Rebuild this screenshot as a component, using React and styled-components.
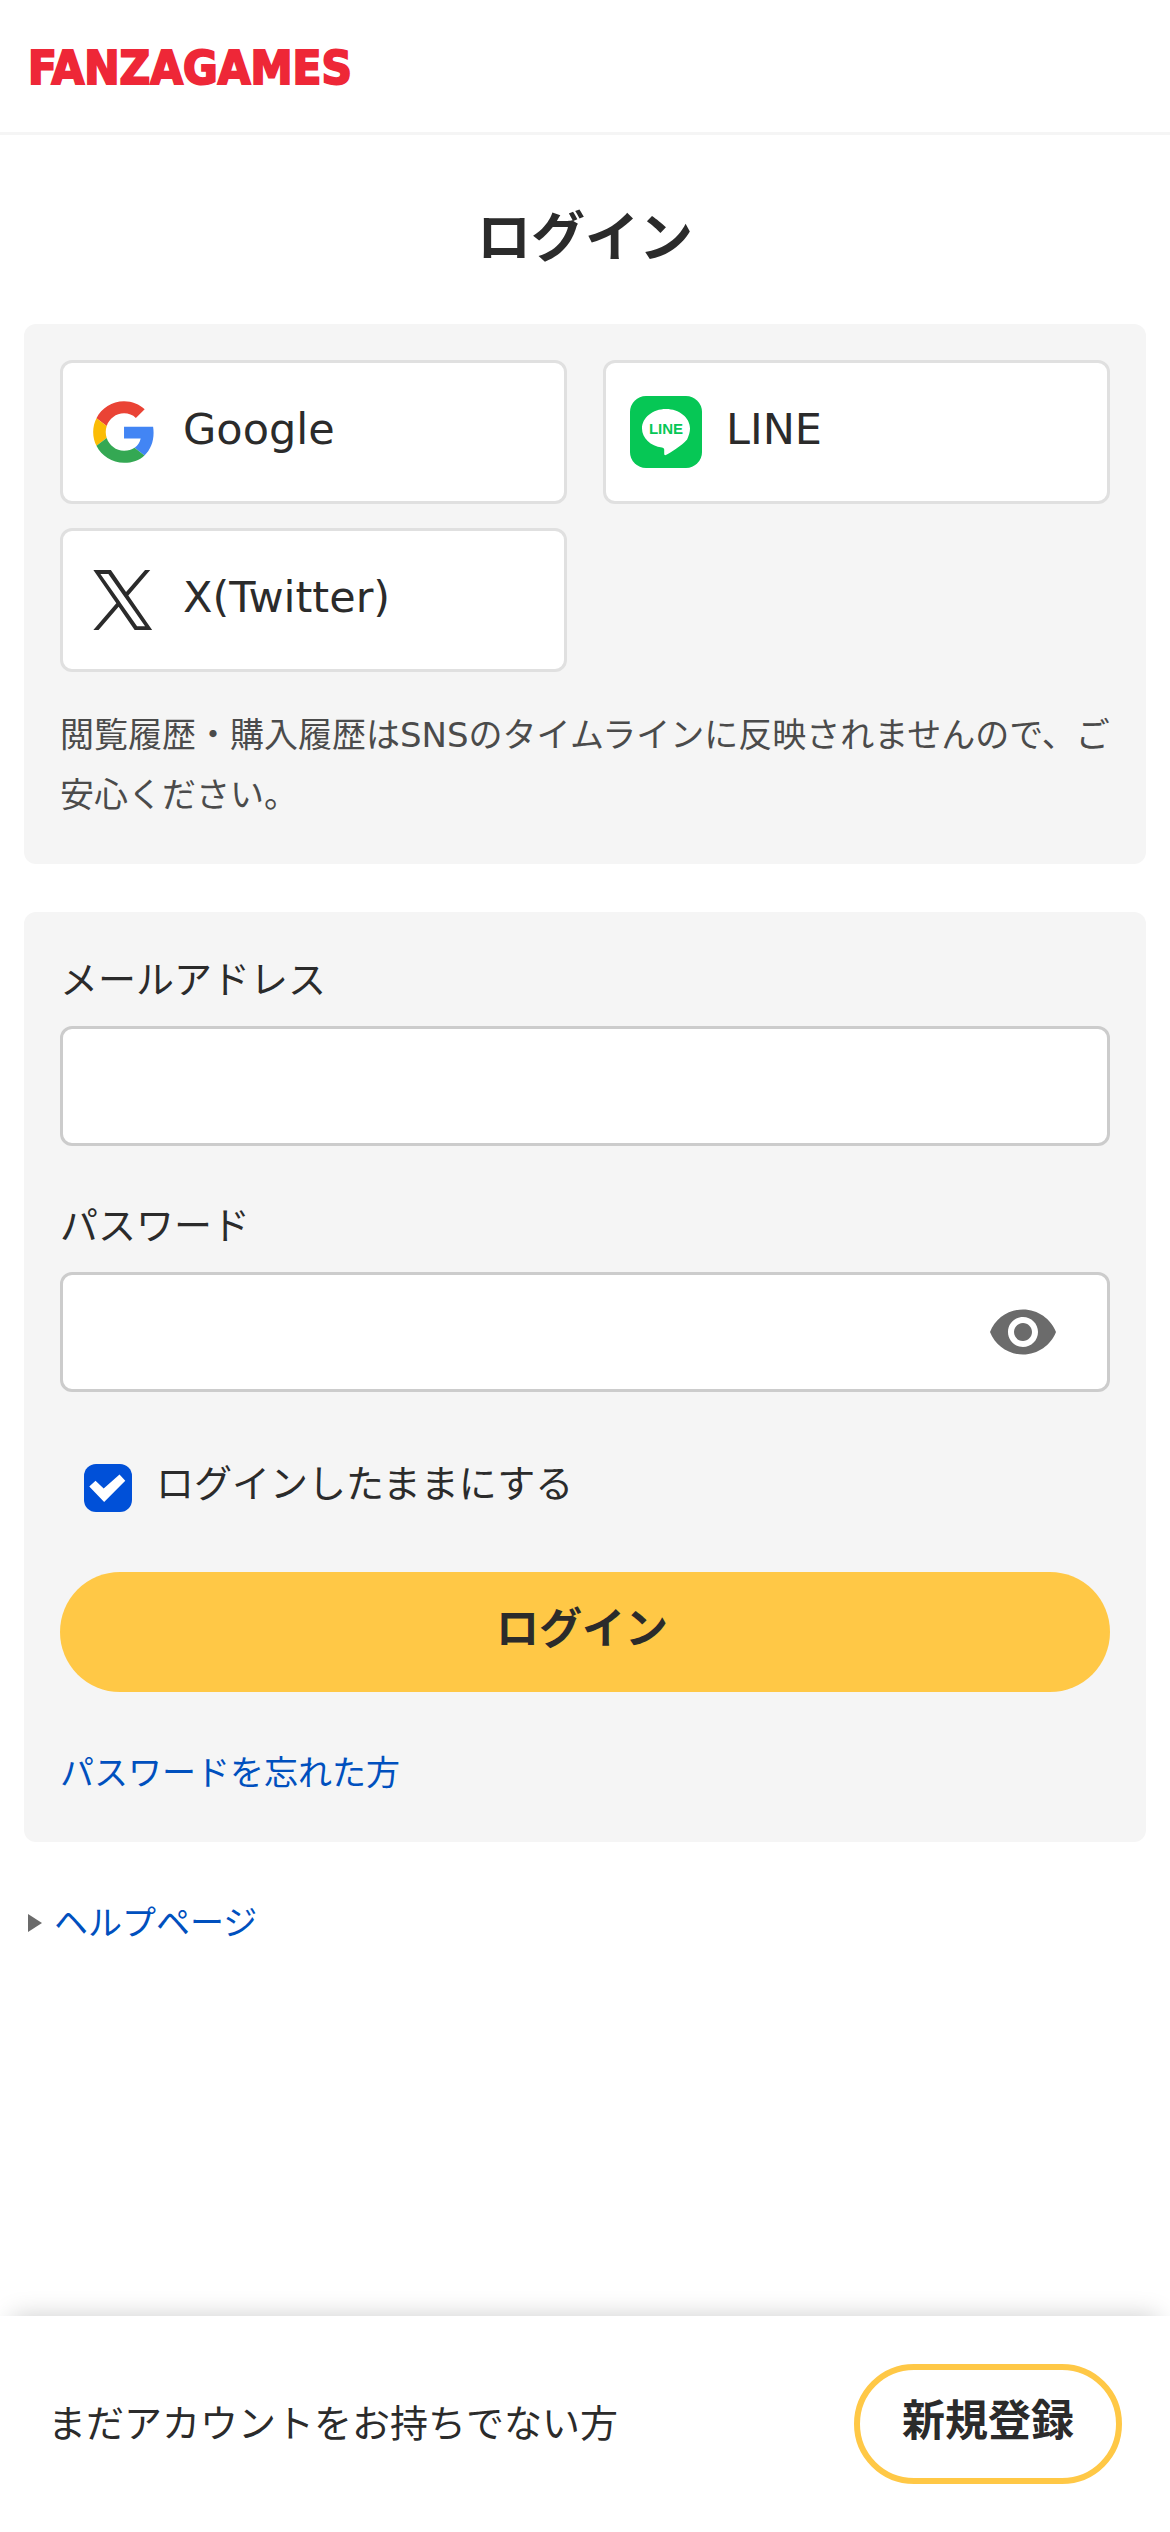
import React, { useState } from 'react';
import styled, { createGlobalStyle } from 'styled-components';
import { MdVisibility, MdVisibilityOff } from 'react-icons/md';

const GlobalStyle = createGlobalStyle`
  *, *::before, *::after {
    box-sizing: border-box;
  }

  body {
    margin: 0;
    background-color: #fff;
    color: #2b2b2b;
    font-family: "DejaVu Sans", "Noto Sans CJK JP", sans-serif;
    font-size: 38px;
    line-height: 60px;
  }

  button, input {
    font: inherit;
    color: inherit;
  }
`;

const Page = styled.div`
  display: flex;
  flex-direction: column;
  min-height: 100vh;
`;

const Header = styled.header`
  display: flex;
  align-items: center;
  height: 135px;
  padding: 0 30px;
  border-bottom: 3px solid #f5f5f5;
`;

const LogoLink = styled.a`
  display: block;
  height: 42px;
`;

const LogoText = styled.text`
  font-family: "DejaVu Sans Condensed", "DejaVu Sans", sans-serif;
  font-size: 47px;
  font-weight: bold;
  fill: #ee2737;
  stroke: #ee2737;
  stroke-width: 2px;
`;

const Main = styled.main`
  padding: 0 24px;
`;

const Title = styled.h1`
  margin: 0;
  padding: 63px 0 45px;
  font-size: 54px;
  font-weight: bold;
  line-height: 81px;
  text-align: center;
`;

const Card = styled.section`
  margin-bottom: 48px;
  padding: 36px;
  border-radius: 12px;
  background-color: #f5f5f5;
`;

const SocialGrid = styled.div`
  display: grid;
  grid-template-columns: 1fr 1fr;
  gap: 24px 36px;
`;

const SocialButton = styled.button`
  display: flex;
  align-items: center;
  gap: 24px;
  height: 144px;
  padding: 0 24px;
  border: 3px solid #e0e0e0;
  border-radius: 12px;
  background-color: #fff;
  font-size: 43px;
  cursor: pointer;

  svg {
    flex: none;
    width: 72px;
    height: 72px;
  }

  span {
    padding-bottom: 6px;
  }
`;

const LineText = styled.text`
  font-family: "Liberation Sans", sans-serif;
  font-size: 15px;
  font-weight: bold;
  fill: #06c755;
`;

const Note = styled.p`
  margin: 33px -12px 3px 0;
  color: #4b4b4b;
  font-size: 34px;
  line-height: 60px;
`;

const Field = styled.div`
  display: flex;
  flex-direction: column;
  gap: 14px;
  margin-bottom: 48px;
`;

const Label = styled.label`
  line-height: 64px;
`;

const InputBox = styled.div`
  display: flex;
  align-items: center;
  height: 120px;
  border: 3px solid #ccc;
  border-radius: 12px;
  background-color: #fff;
  overflow: hidden;
`;

const Input = styled.input`
  flex: 1;
  min-width: 0;
  height: 100%;
  padding: 0 24px;
  border: 0;
  outline: 0;
  background: transparent;
`;

const EyeButton = styled.button`
  display: flex;
  margin-right: 48px;
  padding: 0;
  border: 0;
  background: transparent;
  color: #6b6b6b;
  font-size: 72px;
  cursor: pointer;
`;

const CheckRow = styled.label`
  display: flex;
  align-items: center;
  gap: 24px;
  margin-bottom: 36px;
  padding: 18px 24px;
  line-height: 52px;

  span {
    padding-bottom: 8px;
  }
`;

const Checkbox = styled.input`
  appearance: none;
  flex: none;
  width: 48px;
  height: 48px;
  margin: 0;
  border: 3px solid #ccc;
  border-radius: 12px;
  background-color: #fff;

  &:checked {
    border: 0;
    background-color: #0050d8;
  }

  &:checked::before {
    content: "";
    display: block;
    width: 100%;
    height: 100%;
    background-color: #fff;
    clip-path: polygon(11% 47%, 24% 35%, 41% 51%, 74% 22%, 86% 35%, 42% 79%);
  }
`;

const LoginButton = styled.button`
  display: block;
  width: 100%;
  height: 120px;
  padding: 0 6px 6px 0;
  border: 0;
  border-radius: 60px;
  background-color: #ffc846;
  font-size: 43px;
  font-weight: bold;
  cursor: pointer;
`;

const TextLink = styled.a`
  display: inline-block;
  color: #0050be;
  font-size: 34px;
  line-height: 66px;
  text-decoration: none;
`;

const Forgot = styled.div`
  display: flex;
  margin-top: 48px;
`;

const Help = styled.div`
  display: flex;
  align-items: center;
  gap: 12px;
  padding-left: 4px;

  &::before {
    content: "";
    border-left: 14px solid #6b6b6b;
    border-top: 9px solid transparent;
    border-bottom: 9px solid transparent;
  }
`;

const Footer = styled.footer`
  position: sticky;
  bottom: 0;
  display: flex;
  align-items: center;
  justify-content: space-between;
  margin-top: auto;
  padding: 48px;
  background-color: #fff;
  box-shadow: 0 -12px 24px -12px rgba(0, 0, 0, 0.2);
`;

const RegisterButton = styled.button`
  height: 120px;
  padding: 0 42px 6px;
  border: 6px solid #ffc846;
  border-radius: 60px;
  background-color: #fff;
  font-size: 43px;
  font-weight: bold;
  cursor: pointer;
`;

function GoogleIcon() {
  return (
    <svg viewBox="-4.8 -4 56 56" aria-hidden="true">
      <path fill="#ea4335" d="M24 9.5c3.54 0 6.71 1.22 9.21 3.6l6.85-6.85C35.9 2.38 30.47 0 24 0 14.62 0 6.51 5.38 2.56 13.22l7.98 6.19C12.43 13.72 17.74 9.5 24 9.5z" />
      <path fill="#4285f4" d="M46.98 24.55c0-1.57-.15-3.09-.38-4.55H24v9.02h12.94c-.58 2.96-2.26 5.48-4.78 7.18l7.73 6c4.51-4.18 7.09-10.36 7.09-17.65z" />
      <path fill="#fbbc05" d="M10.53 28.59c-.48-1.45-.76-2.99-.76-4.59s.27-3.14.76-4.59l-7.98-6.19C.92 16.46 0 20.12 0 24c0 3.88.92 7.54 2.56 10.78l7.97-6.19z" />
      <path fill="#34a853" d="M24 48c6.48 0 11.93-2.13 15.89-5.81l-7.73-6c-2.15 1.45-4.92 2.3-8.16 2.3-6.26 0-11.57-4.22-13.47-9.91l-7.98 6.19C6.51 42.62 14.62 48 24 48z" />
    </svg>
  );
}

function LineIcon() {
  return (
    <svg viewBox="0 0 72 72" aria-hidden="true">
      <rect width="72" height="72" rx="16" fill="#06c755" />
      <path
        fill="#fff"
        d="M36 13C22.8 13 12 21.7 12 32.4c0 9.6 8.5 17.6 20 19.100 2.200.5 2.400 1.500 2.200 3.400v2.700c0 1.500.7 2 2.200 1.200 2.800-1.200 15.200-8.900 20.700-15.300C58.700 39.800 60 36.300 60 32.400 60 21.700 49.200 13 36 13z"
      />
      <LineText x="36" y="38" textAnchor="middle">LINE</LineText>
    </svg>
  );
}

function XIcon() {
  return (
    <svg viewBox="-130 -122 1470 1470" aria-hidden="true">
      <path
        fill="#2b2b2b"
        d="M714.163 519.284L1160.89 0H1055.03L667.137 450.887L357.328 0H0L468.492 681.821L0 1226.37H105.866L515.491 750.218L842.672 1226.37H1200L714.137 519.284H714.163ZM569.165 687.828L521.697 619.934L144.011 79.6944H306.615L611.412 515.685L658.88 583.579L1055.08 1150.3H892.476L569.165 687.854V687.828Z"
      />
    </svg>
  );
}

function App() {
  const [email, setEmail] = useState('');
  const [password, setPassword] = useState('');
  const [showPassword, setShowPassword] = useState(false);
  const [keepLogin, setKeepLogin] = useState(true);

  const handleSubmit = (e) => {
    e.preventDefault();
  };

  return (
    <Page>
      <GlobalStyle />
      <Header>
        <LogoLink href="#">
          <svg width="318" height="42" viewBox="0 0 318 42" overflow="visible">
            <LogoText x="-2" y="38">FANZAGAMES</LogoText>
          </svg>
        </LogoLink>
      </Header>

      <Main>
        <Title>ログイン</Title>

        <Card>
          <SocialGrid>
            <SocialButton type="button">
              <GoogleIcon />
              <span>Google</span>
            </SocialButton>
            <SocialButton type="button">
              <LineIcon />
              <span>LINE</span>
            </SocialButton>
            <SocialButton type="button">
              <XIcon />
              <span>X(Twitter)</span>
            </SocialButton>
          </SocialGrid>
          <Note>閲覧履歴・購入履歴はSNSのタイムラインに反映されませんので、ご安心ください。</Note>
        </Card>

        <Card as="form" onSubmit={handleSubmit}>
          <Field>
            <Label htmlFor="email">メールアドレス</Label>
            <InputBox>
              <Input
                id="email"
                type="email"
                value={email}
                onChange={(e) => setEmail(e.target.value)}
              />
            </InputBox>
          </Field>
          <Field>
            <Label htmlFor="password">パスワード</Label>
            <InputBox>
              <Input
                id="password"
                type={showPassword ? 'text' : 'password'}
                value={password}
                onChange={(e) => setPassword(e.target.value)}
              />
              <EyeButton
                type="button"
                aria-pressed={showPassword}
                onClick={() => setShowPassword(!showPassword)}
              >
                {showPassword ? <MdVisibilityOff /> : <MdVisibility />}
              </EyeButton>
            </InputBox>
          </Field>
          <CheckRow>
            <Checkbox
              type="checkbox"
              checked={keepLogin}
              onChange={(e) => setKeepLogin(e.target.checked)}
            />
            <span>ログインしたままにする</span>
          </CheckRow>
          <LoginButton type="submit">ログイン</LoginButton>
          <Forgot>
            <TextLink href="#">パスワードを忘れた方</TextLink>
          </Forgot>
        </Card>

        <Help>
          <TextLink href="#">ヘルプページ</TextLink>
        </Help>
      </Main>

      <Footer>
        <span>まだアカウントをお持ちでない方</span>
        <RegisterButton type="button">新規登録</RegisterButton>
      </Footer>
    </Page>
  );
}

export default App;
